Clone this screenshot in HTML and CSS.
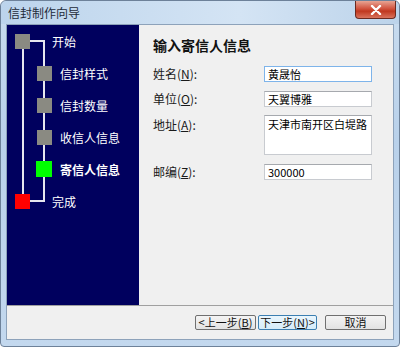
FILE: index.html
```html
<!DOCTYPE html>
<html lang="zh-CN">
<head>
    <meta charset="UTF-8">
    <title>信封制作向导</title>
    <link rel="stylesheet" href="styles.css">
</head>
<body>
    <div class="window">
        <div class="titlebar">
            <span class="title">信封制作向导</span>
            <div class="close-btn">
                <svg width="12" height="10" viewBox="0 0 12 10">
                    <path d="M2 1 L10 9 M10 1 L2 9" stroke="#fff" stroke-width="2.4" stroke-linecap="round"/>
                </svg>
            </div>
        </div>
        <div class="client">
            <div class="main">
                <div class="sidebar">
                    <!-- connecting lines of the step tree -->
                    <div class="line line-left"></div>
                    <div class="line line-top"></div>
                    <div class="line line-right"></div>
                    <div class="line line-bottom"></div>

                    <div class="step root"><span class="box gray"></span><span>开始</span></div>
                    <div class="step child"><span class="box gray"></span><span>信封样式</span></div>
                    <div class="step child"><span class="box gray"></span><span>信封数量</span></div>
                    <div class="step child"><span class="box gray"></span><span>收信人信息</span></div>
                    <div class="step child current"><span class="box green"></span><span>寄信人信息</span></div>
                    <div class="step root"><span class="box red"></span><span>完成</span></div>
                </div>
                <div class="content">
                    <h2>输入寄信人信息</h2>
                    <div class="form">
                        <label>姓名(<u>N</u>):</label>
                        <input type="text" class="focused" value="黄晟怡">
                        <label>单位(<u>O</u>):</label>
                        <input type="text" value="天翼博雅">
                        <label class="top">地址(<u>A</u>):</label>
                        <textarea>天津市南开区白堤路</textarea>
                        <label>邮编(<u>Z</u>):</label>
                        <input type="text" value="300000">
                    </div>
                </div>
            </div>
            <div class="footer">
                <button>&lt;上一步(<u>B</u>)</button>
                <button class="default">下一步(<u>N</u>)&gt;</button>
                <button class="cancel">取消</button>
            </div>
        </div>
    </div>
</body>
</html>
```

FILE: styles.css
```css
* {
    box-sizing: border-box;
}
body {
    margin: 0;
    font-family: "Noto Sans CJK SC", "Liberation Sans", sans-serif;
    font-size: 12px;
    color: #1a1a1a;
    background: #ffffff;
}
.window {
    width: 400px;
    height: 347px;
    display: flex;
    flex-direction: column;
    background: linear-gradient(to bottom, #c9dcef 0%, #b9d1ea 40%, #c3d8ee 100%);
    border: 1px solid #6d8199;
    border-radius: 6px 6px 4px 4px;
    padding: 0 5px 6px 5px;
}
.titlebar {
    height: 23px;
    display: flex;
    justify-content: space-between;
    align-items: flex-start;
    background: linear-gradient(to right, #bcd4ec, #d4e4f4 60%, #bcd3ea);
    margin: 0 -5px;
    padding: 0 3px 0 7px;
    border-radius: 6px 6px 0 0;
}
.title {
    line-height: 23px;
    font-size: 12px;
    color: #1e2b3a;
}
.close-btn {
    width: 41px;
    height: 18px;
    display: flex;
    justify-content: center;
    align-items: center;
    background: linear-gradient(to bottom, #e8a493 0%, #d1533e 45%, #c0381f 60%, #d9735c 100%);
    border: 1px solid #6b2a20;
    border-top: none;
    border-radius: 0 0 4px 4px;
}
.client {
    flex: 1;
    display: flex;
    flex-direction: column;
    background: #f0f0f0;
    border: 1px solid #8da2ba;
}
.main {
    display: flex;
    height: 281px;
    border-bottom: 1px solid #a0a0a0;
}
.sidebar {
    position: relative;
    width: 132px;
    background: #00005e;
    color: #ffffff;
}
.step {
    height: 32px;
    display: flex;
    align-items: center;
    font-size: 12px;
}
.step:first-of-type {
    margin-top: 0;
}
.root {
    padding-left: 8px;
}
.root .box {
    margin-right: 22px;
}
.child {
    padding-left: 30px;
}
.child .box {
    margin-right: 8px;
}
.current {
    font-weight: bold;
}
.box {
    display: inline-block;
    width: 15px;
    height: 15px;
    position: relative;
    z-index: 1;
}
.gray {
    background: #8a8a82;
}
.green {
    background: #00ff00;
    width: 16px;
    height: 16px;
    margin-left: -1px;
}
.red {
    background: #ff0000;
}
.line {
    position: absolute;
    background: #e6e6ee;
}
.line-left {
    left: 15px;
    top: 16px;
    width: 2px;
    height: 162px;
}
.line-top {
    left: 22px;
    top: 15px;
    width: 16px;
    height: 2px;
}
.line-right {
    left: 36px;
    top: 15px;
    width: 2px;
    height: 162px;
}
.line-bottom {
    left: 22px;
    top: 175px;
    width: 16px;
    height: 2px;
}
.content {
    flex: 1;
    padding: 12px 0 0 14px;
}
h2 {
    margin: 0 0 12px 0;
    font-size: 14px;
    line-height: 16px;
    font-weight: bold;
    color: #111;
}
.form {
    display: grid;
    grid-template-columns: 111px 108px;
    row-gap: 8px;
    align-items: center;
}
.form label {
    font-size: 12px;
}
.form label.top {
    align-self: start;
    margin-top: 1px;
}
.form input,
.form textarea {
    height: 16px;
    border: 1px solid #c8cbd0;
    border-top-color: #a6a9ae;
    background: #ffffff;
    font-family: "Noto Sans CJK SC", "Liberation Sans", sans-serif;
    font-size: 11px;
    color: #000;
    padding: 0 3px;
    margin: 0;
    outline: none;
}
.form input.focused {
    border-color: #7eb4ea;
}
.form textarea {
    height: 40px;
    resize: none;
    padding-top: 1px;
    line-height: 14px;
    overflow: hidden;
}
.footer {
    flex: 1;
    display: flex;
    justify-content: flex-end;
    align-items: center;
    gap: 2px;
    padding-right: 7px;
}
button {
    width: 61px;
    height: 15px;
    padding: 0;
    border: 1px solid #707070;
    border-radius: 2px;
    background: linear-gradient(to bottom, #f4f4f4, #e2e2e2);
    font-family: "Noto Sans CJK SC", "Liberation Sans", sans-serif;
    font-size: 11px;
    line-height: 13px;
    color: #111;
}
button.default {
    width: 59px;
    border-color: #3c7fb1;
    background: linear-gradient(to bottom, #eaf6fd, #d5ecf9);
}
button.cancel {
    margin-left: 6px;
}
```
